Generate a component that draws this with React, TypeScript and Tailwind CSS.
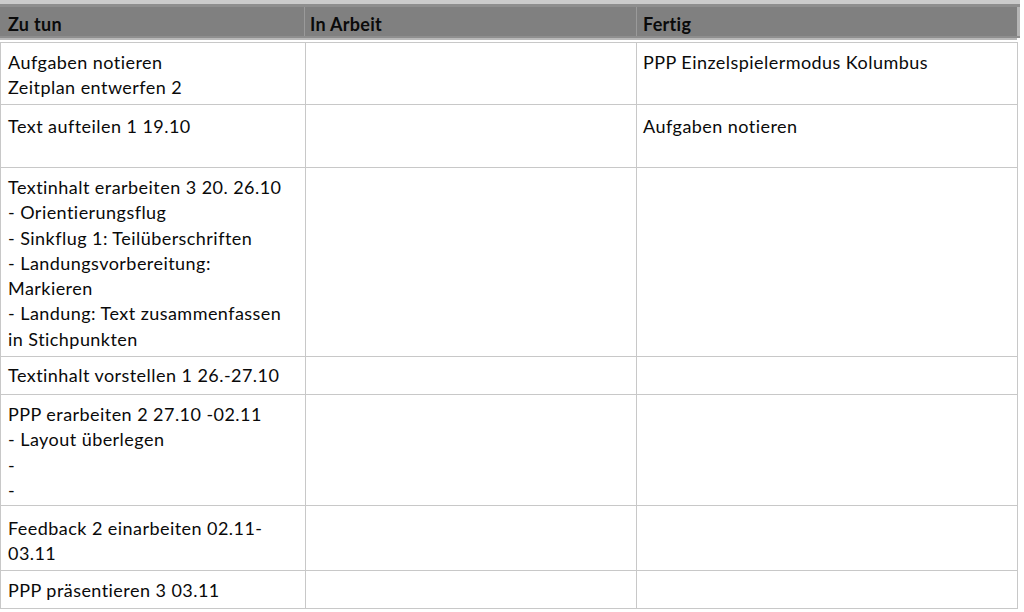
import React from 'react';

const rows: { h: number; pt: number; todo: string[]; done?: string }[] = [
  { h: 61, pt: 7, todo: ['Aufgaben notieren', 'Zeitplan entwerfen 2'], done: 'PPP Einzelspielermodus Kolumbus' },
  { h: 63, pt: 9, todo: ['Text aufteilen 1 19.10'], done: 'Aufgaben notieren' },
  {
    h: 189,
    pt: 7,
    todo: [
      'Textinhalt erarbeiten 3 20. 26.10',
      '- Orientierungsflug',
      '- Sinkflug 1: Teilüberschriften',
      '- Landungsvorbereitung:',
      'Markieren',
      '- Landung: Text zusammenfassen',
      'in Stichpunkten',
    ],
  },
  { h: 38, pt: 6, todo: ['Textinhalt vorstellen 1 26.-27.10'] },
  { h: 111, pt: 7, todo: ['PPP erarbeiten 2 27.10 -02.11', '- Layout überlegen', '-', '-'] },
  { h: 65, pt: 10, todo: ['Feedback 2 einarbeiten 02.11-', '03.11'] },
  { h: 38, pt: 7, todo: ['PPP präsentieren 3 03.11'] },
];

const Lines = ({ lines }: { lines: string[] }) => (
  <>
    {lines.map((l, i) => (
      <div key={i} className="leading-[25.3px] whitespace-nowrap">
        {l}
      </div>
    ))}
  </>
);

export default function App() {
  return (
    <div
      className="w-[1024px] h-[612px] bg-white text-[#0a0a0a] overflow-hidden"
      style={{ fontFamily: 'Lato, "Open Sans", sans-serif' }}
    >
      {/* header band */}
      <div className="w-[1020px] border-t-4 border-[#cbcbcb]">
        <div className="flex bg-[#8e8e8e] pt-[3px] pb-[2px]">
          <div className="grid grid-cols-[304px_331px_381px] gap-px bg-[#9a9a9a] w-[1017px] text-[18px] font-bold tracking-[0.3px]">
            <div className="bg-[#808080] pl-2 h-[29px] pt-[6px] leading-[22px]">Zu tun</div>
            <div className="bg-[#808080] pl-[5px] h-[29px] pt-[6px] leading-[22px]">In Arbeit</div>
            <div className="bg-[#808080] pl-[6px] h-[29px] pt-[6px] leading-[22px]">Fertig</div>
          </div>
          <div className="flex-1 bg-[#b5b5b5]" />
        </div>
        <div className="h-[2px] bg-[#b8b8b8] w-[1017px]" />
      </div>
      <div className="h-[2px]" />

      {/* body */}
      <div className="w-[1018px] border border-[#c8c8c8] text-[18px] tracking-[0.45px]">
        {rows.map((r, i) => (
          <div
            key={i}
            className={`grid grid-cols-[304px_331px_381px] ${i > 0 ? 'border-t border-[#c8c8c8]' : ''}`}
            style={{ height: r.h }}
          >
            <div className="pl-[7px]" style={{ paddingTop: r.pt }}>
              <Lines lines={r.todo} />
            </div>
            <div className="border-l border-[#c8c8c8]" />
            <div className="border-l border-[#c8c8c8] pl-[6px]" style={{ paddingTop: r.pt }}>
              {r.done && <Lines lines={[r.done]} />}
            </div>
          </div>
        ))}
      </div>
    </div>
  );
}
